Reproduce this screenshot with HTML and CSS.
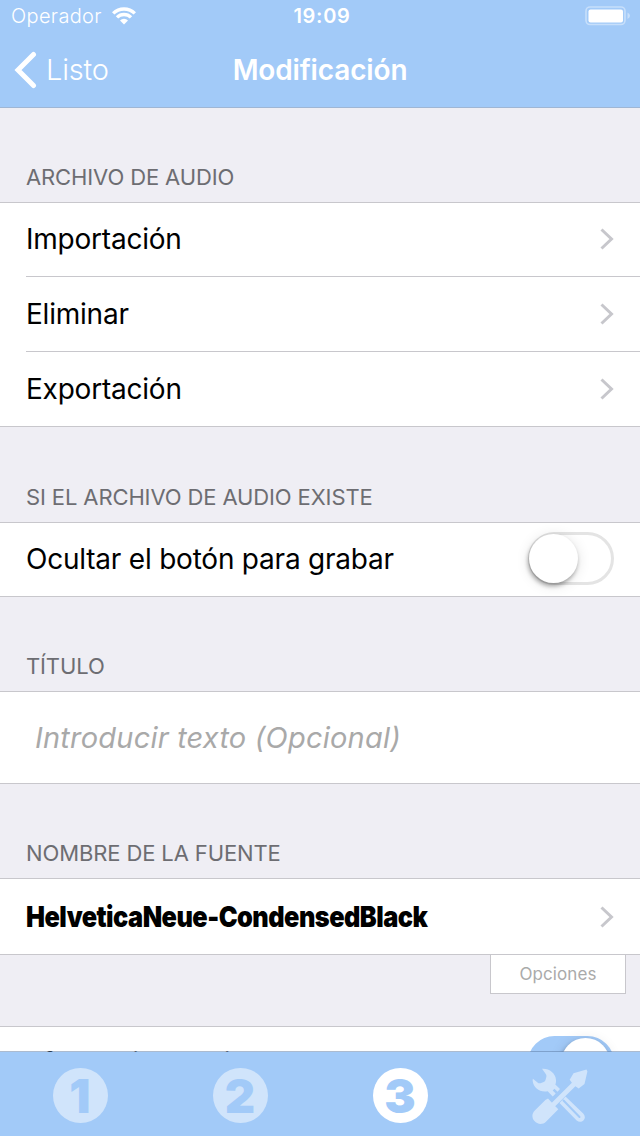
FILE: index.html
```html
<!DOCTYPE html>
<html lang="es">
<head>
    <meta charset="UTF-8">
    <meta name="viewport" content="width=device-width, initial-scale=1.0">
    <title>Modificación</title>
    <link rel="stylesheet" href="styles.css">
</head>
<body>
    <header class="top-bar">
        <div class="status">
            <div class="carrier">
                <span class="carrier-name">Operador</span>
                <svg class="wifi" width="24" height="18" viewBox="0 0 24 18">
                    <g fill="none" stroke="#fff" stroke-width="3.4">
                        <path d="M1.2 6.4a15.4 15.4 0 0 1 21.6 0"/>
                        <path d="M5 10.4a10 10 0 0 1 14 0"/>
                    </g>
                    <path d="M12 17.4l-4-4a5.8 5.8 0 0 1 8 0z" fill="#fff"/>
                </svg>
            </div>
            <span class="time">19:09</span>
            <svg class="battery" width="46" height="20" viewBox="0 0 46 20">
                <rect x="1" y="1" width="39" height="17.5" rx="4" fill="none" stroke="#fff" stroke-opacity=".4" stroke-width="1.6"/>
                <rect x="3.5" y="3.5" width="34.5" height="13" rx="2" fill="#fff"/>
                <path d="M42.5 6.5q5 3.2 0 6.5z" fill="#fff" fill-opacity=".4"/>
            </svg>
        </div>
        <nav class="nav">
            <a class="back">
                <svg width="24" height="38" viewBox="0 0 24 38">
                    <path d="M20.500 3.500L5 19l15.500 15.500" fill="none" stroke="#fff" stroke-width="5" stroke-linecap="round" stroke-linejoin="miter"/>
                </svg>
                <span class="back-label">Listo</span>
            </a>
            <h1 class="title">Modificación</h1>
        </nav>
    </header>

    <main class="content">
        <h2 class="section">ARCHIVO DE AUDIO</h2>
        <div class="group">
            <div class="row"><span>Importación</span><svg class="chevron" width="16" height="24" viewBox="0 0 16 24"><path d="M2.500 2.500L12.500 12l-10 9.500"/></svg></div>
            <div class="row"><span>Eliminar</span><svg class="chevron" width="16" height="24" viewBox="0 0 16 24"><path d="M2.500 2.500L12.500 12l-10 9.500"/></svg></div>
            <div class="row"><span>Exportación</span><svg class="chevron" width="16" height="24" viewBox="0 0 16 24"><path d="M2.500 2.500L12.500 12l-10 9.500"/></svg></div>
        </div>

        <h2 class="section section-tall">SI EL ARCHIVO DE AUDIO EXISTE</h2>
        <div class="group">
            <div class="row"><span>Ocultar el botón para grabar</span><span class="switch"></span></div>
        </div>

        <h2 class="section">TÍTULO</h2>
        <div class="group">
            <div class="row row-input"><span class="placeholder">Introducir texto (Opcional)</span></div>
        </div>

        <h2 class="section">NOMBRE DE LA FUENTE</h2>
        <div class="group">
            <div class="row row-font"><span class="font-name">HelveticaNeue-CondensedBlack</span><svg class="chevron" width="16" height="24" viewBox="0 0 16 24"><path d="M2.500 2.500L12.500 12l-10 9.500"/></svg></div>
        </div>
        <div class="options-wrap"><button class="options">Opciones</button></div>

        <div class="group">
            <div class="row row-last"><span class="last-label">Efecto visual mixto</span><span class="switch on"></span></div>
        </div>
    </main>

    <footer class="tab-bar">
        <a class="tab"><span class="number">1</span></a>
        <a class="tab"><span class="number">2</span></a>
        <a class="tab active"><span class="number">3</span></a>
        <a class="tab">
            <svg class="tools" width="56" height="56" viewBox="0 0 56 56">
                <!-- wrench -->
                <path d="M10 .8C17 .2 23.500 5 24 12c.1 2-.2 3.500-.7 4.600l4.700 4.500-2.500 2.600-3-3-1.800 1.900 3 3-3 3-5-5.400C8 24.700 1.500 20 .7 13c-.1-1 0-1.700.2-2.300L5.500 14.500q1.500 1.200 3 .7l3.200-1.200q1.500-.6 1.800-2l.9-3.200q.4-1.800-1-3.200z"/>
                <path d="M33.500 28.500l17.700 17c4.500 5-1.700 11-6.500 7L27.500 35z"/>
                <path class="slot" d="M31.500 32.500l16 16.500"/>
                <!-- screwdriver -->
                <path d="M54.500 1.500l-13 3.800-3.800 6.500 2.200 2.900-21.400 21.400 3.400 3.400 21.500-21.300 3.300 2.200 5.800-4.400 2.900-12.500z"/>
                <path d="M16 30.500l3 3.200 4 4.200 3.300 3.300-12.100 12.300c-4 4-9 2.700-11.700-.4-2.700-3-3-7.200.3-10.600L13.400 32z"/>
            </svg>
        </a>
    </footer>
</body>
</html>
```

FILE: styles.css
```css
* {
    box-sizing: border-box;
}
body {
    margin: 0;
    height: 1136px;
    display: flex;
    flex-direction: column;
    overflow: hidden;
    background-color: #efeef4;
    font-family: Inter, "Liberation Sans", sans-serif;
    font-size: 28px;
    color: #000;
}
.top-bar {
    height: 108px;
    flex: none;
    background-color: #a2caf8;
    border-bottom: 1px solid #9fb6d4;
    color: #fff;
}
.status {
    height: 32px;
    display: grid;
    grid-template-columns: 1fr auto 1fr;
    align-items: center;
    padding: 0 9px 0 11px;
    font-size: 20px;
}
.carrier {
    display: flex;
    align-items: center;
    gap: 10px;
}
.carrier-name {
    font-weight: 350;
    letter-spacing: 0.35px;
}
.time {
    padding-left: 2px;
    font-weight: 600;
    letter-spacing: 0.7px;
}
.battery {
    justify-self: end;
}
.nav {
    height: 75px;
    display: grid;
    grid-template-columns: 1fr auto 1fr;
    align-items: center;
    padding: 0 13px;
}
.back {
    display: flex;
    align-items: center;
    gap: 9px;
}
.back-label {
    font-size: 29px;
    font-weight: 350;
    letter-spacing: -0.2px;
}
.title {
    margin: 0;
    font-size: 28px;
    font-weight: 600;
    letter-spacing: -0.15px;
}
.content {
    flex: 1;
    min-height: 0;
    overflow: hidden;
}
.section {
    height: 94px;
    margin: 0;
    padding: 0 26px 12px;
    display: flex;
    align-items: flex-end;
    font-size: 22px;
    line-height: 26px;
    font-weight: 400;
    letter-spacing: -0.12px;
    color: #6d6d72;
}
.section-tall {
    height: 95px;
}
.group {
    background-color: #fff;
    border-top: 1px solid #c8c7cc;
    border-bottom: 1px solid #c8c7cc;
}
.row {
    height: 73px;
    margin-left: 26px;
    padding-right: 25px;
    padding-bottom: 2px;
    display: flex;
    align-items: center;
    justify-content: space-between;
    white-space: nowrap;
    letter-spacing: -0.22px;
}
.row + .row {
    height: 75px;
    padding-bottom: 0;
    border-top: 1px solid #c8c7cc;
}
.row.row-input {
    height: 91px;
    padding-bottom: 0;
    padding-left: 9px;
}
.row.row-font {
    height: 75px;
    padding-bottom: 0;
}
.row.row-last {
    height: 71px;
    padding-bottom: 0;
}
.last-label {
    padding-top: 1px;
}
.placeholder {
    font-size: 29px;
    font-style: italic;
    font-weight: 400;
    letter-spacing: 0.2px;
    color: #a9a9a9;
}
.font-name {
    width: 400px;
    font-weight: 900;
    font-size: 29px;
    letter-spacing: -0.6px;
    transform: scaleX(0.873);
    transform-origin: left center;
}
.chevron {
    fill: none;
    stroke: #c7c7cc;
    stroke-width: 3;
}
.switch {
    width: 86px;
    height: 53px;
    margin-right: 1px;
    padding: 1px;
    border: 3px solid #e4e4e4;
    border-radius: 27px;
    display: flex;
    align-items: center;
}
.switch::before {
    content: "";
    width: 49px;
    height: 49px;
    flex: none;
    margin-left: -3px;
    border-radius: 50%;
    background-color: #fff;
    box-shadow: -1px 3px 4px rgba(0, 0, 0, 0.32), 0 2px 14px rgba(0, 0, 0, 0.12);
}
.switch.on {
    border-color: #a2caf8;
    background-color: #a2caf8;
    justify-content: flex-end;
}
.options-wrap {
    height: 71px;
    display: flex;
    align-items: flex-start;
    justify-content: flex-end;
    padding-right: 14px;
}
.options {
    width: 136px;
    height: 39px;
    padding: 0;
    border: 1px solid #c8c7cc;
    border-top: none;
    background-color: #fff;
    font-family: Inter, "Liberation Sans", sans-serif;
    font-size: 17px;
    letter-spacing: 0.1px;
    color: #aaa;
}
.tab-bar {
    height: 85px;
    margin-top: -1px;
    flex: none;
    position: relative;
    display: grid;
    grid-template-columns: repeat(4, 1fr);
    background-color: #a2caf8;
    background-clip: padding-box;
    border-top: 1px solid rgba(90, 120, 160, 0.5);
}
.tab {
    display: flex;
    align-items: center;
    justify-content: center;
    padding-top: 3px;
}
.number {
    width: 55px;
    height: 55px;
    display: flex;
    align-items: center;
    justify-content: center;
    border-radius: 50%;
    background-color: #d0e4fb;
    color: #a2caf8;
    font-size: 47px;
    line-height: 55px;
    font-weight: 900;
}
.tab.active .number {
    background-color: #fff;
}
.tools {
    fill: #d0e4fb;
}
.slot {
    fill: none;
    stroke: #a2caf8;
    stroke-width: 2;
    stroke-linecap: round;
}
```
